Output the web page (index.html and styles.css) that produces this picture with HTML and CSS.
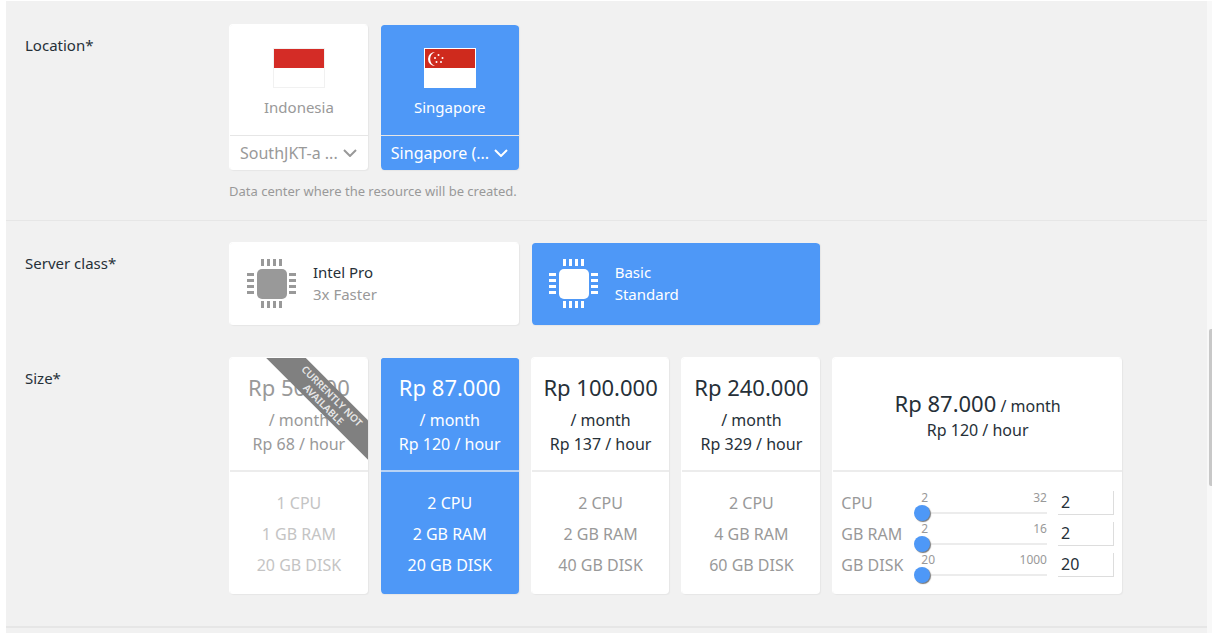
FILE: index.html
```html
<!DOCTYPE html>
<html lang="en">
<head>
<meta charset="utf-8">
<meta name="viewport" content="width=device-width, initial-scale=1">
<title>Create server</title>
<link rel="stylesheet" href="styles.css">
</head>
<body>
<svg class="defs" aria-hidden="true">
  <symbol id="chip" viewBox="0 0 50 50">
    <rect x="10" y="10" width="30" height="30" rx="5"/>
    <path d="M14 0h3v7h-3zM20 0h3v7h-3zM26 0h3v7h-3zM32 0h3v7h-3zM14 42h3v7h-3zM20 42h3v7h-3zM26 42h3v7h-3zM32 42h3v7h-3zM0 14h7v3H0zM0 20h7v3H0zM0 26h7v3H0zM0 32h7v3H0zM42 14h7v3h-7zM42 20h7v3h-7zM42 26h7v3h-7zM42 32h7v3h-7z"/>
  </symbol>
  <symbol id="chevron" viewBox="0 0 14 8">
    <path d="M1 1l6 6 6-6" fill="none" stroke="currentColor" stroke-width="2"/>
  </symbol>
</svg>
<div class="page">
<form class="panel">
  <section class="section">
    <div class="field">
      <h2 class="field-label">Location*</h2>
      <div class="options">
        <div class="card location">
          <button type="button" class="location-pick">
            <svg class="flag" viewBox="0 0 52 40" aria-hidden="true">
              <rect x="0" y="0" width="52" height="40" fill="#f1f1f1"/>
              <rect x="1" y="20" width="50" height="19" fill="#fff"/>
              <rect x="1" y="1" width="50" height="19" fill="#d42c26"/>
            </svg>
            <span>Indonesia</span>
          </button>
          <div class="zone">
            <select class="zone-select" aria-label="Indonesia zone"><option>SouthJKT-a ...</option></select>
            <svg class="chevron" aria-hidden="true"><use href="#chevron"/></svg>
          </div>
        </div>
        <div class="card location selected">
          <button type="button" class="location-pick" aria-pressed="true">
            <svg class="flag" viewBox="0 0 52 40" aria-hidden="true">
              <rect x="0" y="0" width="52" height="40" fill="#fff"/>
              <rect x="1" y="1" width="50" height="19" fill="#cf2a1d"/>
              <path d="M11 4a7 7 0 1 0 0 14a7.500 7.500 0 0 1 0-14z" fill="#fff"/>
              <g fill="#fff"><circle cx="14.500" cy="7" r="1"/><circle cx="18.500" cy="10" r="1"/><circle cx="17" cy="14" r="1"/><circle cx="12.500" cy="14" r="1"/><circle cx="11" cy="10" r="1"/></g>
            </svg>
            <span>Singapore</span>
          </button>
          <div class="zone">
            <select class="zone-select" aria-label="Singapore zone"><option>Singapore (...</option></select>
            <svg class="chevron" aria-hidden="true"><use href="#chevron"/></svg>
          </div>
        </div>
        <p class="help">Data center where the resource will be created.</p>
      </div>
    </div>
  </section>

  <section class="section section-server">
    <div class="field">
      <h2 class="field-label">Server class*</h2>
      <div class="options">
        <button type="button" class="card wide server">
          <svg class="chip" aria-hidden="true"><use href="#chip"/></svg>
          <span class="server-text"><span class="server-name">Intel Pro</span><span>3x Faster</span></span>
        </button>
        <button type="button" class="card wide server selected" aria-pressed="true">
          <svg class="chip" aria-hidden="true"><use href="#chip"/></svg>
          <span class="server-text"><span class="server-name">Basic</span><span>Standard</span></span>
        </button>
      </div>
    </div>

    <div class="field">
      <h2 class="field-label">Size*</h2>
      <div class="options">
        <button type="button" class="card size unavailable" disabled>
          <span class="size-head"><span class="price">Rp 50.000</span><span>/ month</span><span>Rp 68 / hour</span></span>
          <span class="size-body"><span>1 CPU</span><span>1 GB RAM</span><span>20 GB DISK</span></span>
          <span class="ribbon">CURRENTLY NOT<br>AVAILABLE</span>
        </button>
        <button type="button" class="card size selected" aria-pressed="true">
          <span class="size-head"><span class="price">Rp 87.000</span><span>/ month</span><span>Rp 120 / hour</span></span>
          <span class="size-body"><span>2 CPU</span><span>2 GB RAM</span><span>20 GB DISK</span></span>
        </button>
        <button type="button" class="card size">
          <span class="size-head"><span class="price">Rp 100.000</span><span>/ month</span><span>Rp 137 / hour</span></span>
          <span class="size-body"><span>2 CPU</span><span>2 GB RAM</span><span>40 GB DISK</span></span>
        </button>
        <button type="button" class="card size">
          <span class="size-head"><span class="price">Rp 240.000</span><span>/ month</span><span>Rp 329 / hour</span></span>
          <span class="size-body"><span>2 CPU</span><span>4 GB RAM</span><span>60 GB DISK</span></span>
        </button>
        <div class="card wide size">
          <div class="size-head custom-head">
            <div><span class="price">Rp 87.000</span> / month</div>
            <div>Rp 120 / hour</div>
          </div>
          <div class="size-body custom-body">
            <div class="spec">
              <label for="cpu">CPU</label>
              <div class="slider">
                <div class="limits"><span>2</span><span>32</span></div>
                <input class="range" type="range" min="2" max="32" value="2" aria-label="CPU slider">
              </div>
              <input class="amount" id="cpu" type="text" value="2">
            </div>
            <div class="spec">
              <label for="ram">GB RAM</label>
              <div class="slider">
                <div class="limits"><span>2</span><span>16</span></div>
                <input class="range" type="range" min="2" max="16" value="2" aria-label="GB RAM slider">
              </div>
              <input class="amount" id="ram" type="text" value="2">
            </div>
            <div class="spec">
              <label for="disk">GB DISK</label>
              <div class="slider">
                <div class="limits"><span>20</span><span>1000</span></div>
                <input class="range" type="range" min="20" max="1000" value="20" aria-label="GB DISK slider">
              </div>
              <input class="amount" id="disk" type="text" value="20">
            </div>
          </div>
        </div>
      </div>
    </div>
  </section>
</form>
<div class="scrollbar"><div class="scroll-thumb"></div></div>
</div>
</body>
</html>
```
FILE: styles.css
```css
* { box-sizing: border-box; }

body {
  margin: 0;
  background: #fff;
  color: #263038;
  font: 15px/24px "Segoe UI", "Noto Sans", sans-serif;
}

button, input, select { font: inherit; color: inherit; }

.defs { display: none; }

.page {
  display: flex;
  padding: 1px 0 5px 6px;
}

.panel {
  flex: 1;
  min-width: 0;
  background: #f1f1f1;
  padding-bottom: 5px;
}

.scrollbar {
  width: 5px;
  padding: 328px 0 0 2px;
  background: #f8f8f8;
}

.scroll-thumb {
  height: 157px;
  border-radius: 2px 0 0 2px;
  background: #c8c8c8;
}

.section {
  padding: 23px 85px 19px 19px;
  border-bottom: 1px solid #e6e6e6;
}

.section-server {
  display: grid;
  gap: 32px;
  padding-top: 21px;
  padding-bottom: 32px;
  border-bottom-width: 2px;
}

.field {
  display: grid;
  grid-template-columns: 204px minmax(0, 1fr);
}

.field-label {
  margin: 0;
  padding-top: 9px;
  font-size: 15px;
  font-weight: 400;
}

.options {
  display: grid;
  grid-template-columns: repeat(6, minmax(0, 1fr));
  column-gap: 12px;
}

.card {
  position: relative;
  overflow: hidden;
  padding: 0;
  border: 0 solid #fff;
  border-width: 1px 0 0 1px;
  border-radius: 4px;
  background: #fff padding-box;
  color: #999;
  box-shadow: 1px 1px 1px #e6e6e6;
}

.wide { grid-column: span 2; }

.selected,
.selected .size-head,
.selected .server-name { background-color: #4e98f7; color: #fff; }

.selected { border-color: #f1f1f1; }

.location-pick {
  display: flex;
  flex-direction: column;
  align-items: center;
  gap: 7px;
  width: 100%;
  padding: 23px 0 16px;
  border: 0;
  background: none;
}

.flag { width: 52px; height: 40px; }

.zone {
  display: flex;
  align-items: center;
  height: 35px;
  padding: 0 11px 0 10px;
  border-top: 1px solid #e6e6e6;
  font-size: 16px;
}

.zone-select {
  flex: 1;
  min-width: 0;
  padding: 0;
  border: 0;
  appearance: none;
  background: transparent;
}

.chevron { width: 14px; height: 8px; }

.help {
  grid-column: 1 / -1;
  margin: 11px 0 0;
  color: #999;
  font-size: 13px;
  line-height: 20px;
}

.server {
  display: flex;
  align-items: center;
  gap: 16px;
  padding: 16px 17px;
  height: 83px;
  text-align: left;
}

.chip { width: 50px; height: 50px; fill: currentColor; }

.server-text {
  display: flex;
  flex-direction: column;
  padding-bottom: 2px;
  line-height: 22px;
}

.server-name { color: #263038; }

.size { text-align: center; font-size: 16px; }

.size-head {
  display: flex;
  flex-direction: column;
  height: 114px;
  padding: 10px 0 14px;
  border-bottom: 2px solid #ececec;
  color: #263038;
}

.selected .size-head { border-color: #b8d3f5; }

.price { margin-bottom: 2px; font-size: 22px; line-height: 38px; }

.size-body {
  display: flex;
  flex-direction: column;
  padding: 16px 0 13px;
  line-height: 31px;
}

.unavailable .size-head { color: #999; }
.unavailable .size-body { color: #c4c4c4; }

.ribbon {
  position: absolute;
  top: 28px;
  left: 18px;
  width: 160px;
  height: 28px;
  padding-top: 2px;
  background: #808080;
  color: #e8e8e8;
  font-size: 10px;
  font-weight: 600;
  line-height: 12px;
  transform: rotate(45deg);
}

.custom-head { padding-top: 34px; }

.custom-head .price { line-height: 22px; }

.custom-body { padding-left: 8px; padding-right: 8px; }

.spec {
  display: grid;
  grid-template-columns: 73px minmax(0, 1fr) 56px;
  height: 31px;
  text-align: left;
}

.slider { margin-right: 11px; }

.limits {
  display: flex;
  justify-content: space-between;
  padding-left: 7px;
  font-size: 12px;
  line-height: 16px;
  height: 17px;
  padding-top: 2px;
}

.range {
  display: block;
  width: 100%;
  height: 16px;
  margin: 0;
  appearance: none;
  background: transparent;
}

.range::-webkit-slider-runnable-track {
  height: 2px;
  background: #ececec;
}

.range::-webkit-slider-thumb {
  appearance: none;
  width: 16px;
  height: 16px;
  margin-top: -7px;
  border-radius: 50%;
  background: #4e98f7;
  box-shadow: 1px 1px 1px #777;
}

.amount {
  width: 100%;
  height: 24px;
  margin-top: 3px;
  padding: 0 3px;
  border: 0;
  border-right: 1px solid #ddd;
  border-bottom: 1px solid #ddd;
  color: #263038;
}
```
